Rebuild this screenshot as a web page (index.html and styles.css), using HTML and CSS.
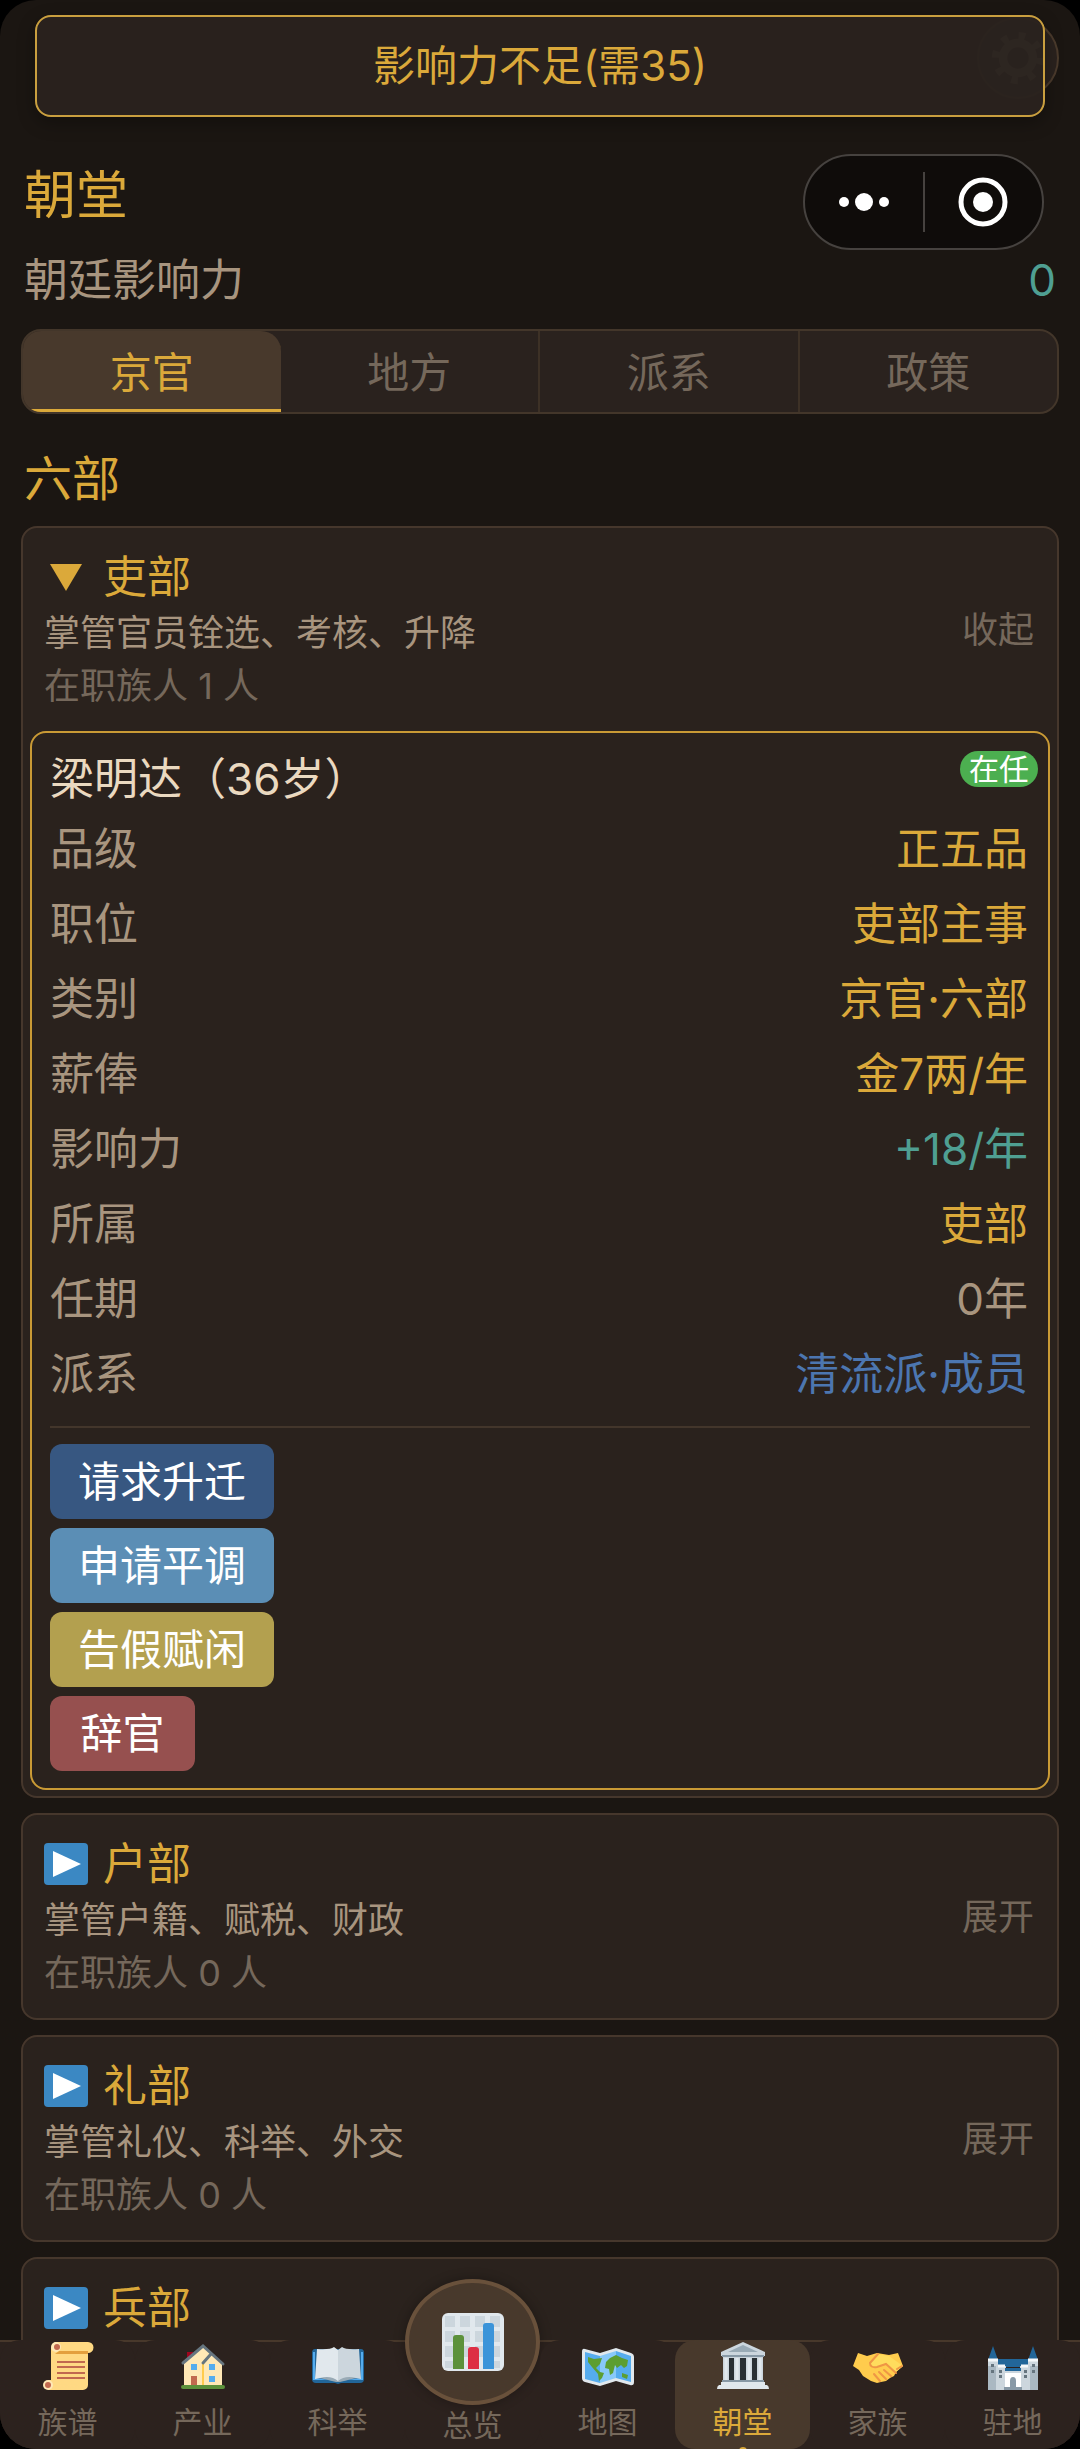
FILE: index.html
```html
<!DOCTYPE html>
<html lang="zh-CN">
<head>
    <meta charset="UTF-8">
    <meta name="viewport" content="width=device-width, initial-scale=1.0">
    <title>朝堂</title>
    <link rel="stylesheet" href="styles.css">
</head>
<body>
    <div class="app">
        <button class="settings" aria-label="设置">
            <svg viewBox="0 0 60 60" width="56" height="56">
                <circle cx="30" cy="30" r="16" fill="none" stroke="#8a7d70" stroke-width="9"/>
                <circle cx="30" cy="30" r="24" fill="none" stroke="#8a7d70" stroke-width="8" stroke-dasharray="7 11.85"/>
            </svg>
        </button>
        <div class="toast" role="alert">影响力不足(需35)</div>
        <div class="capsule">
            <button aria-label="更多">
                <svg viewBox="0 0 52 20" width="52" height="20" fill="#fff">
                    <circle cx="6" cy="10" r="5"/>
                    <circle cx="26" cy="10" r="9"/>
                    <circle cx="46" cy="10" r="5"/>
                </svg>
            </button>
            <button aria-label="关闭">
                <svg viewBox="0 0 52 52" width="52" height="52">
                    <circle cx="26" cy="26" r="22" fill="none" stroke="#fff" stroke-width="5"/>
                    <circle cx="26" cy="26" r="10" fill="#fff"/>
                </svg>
            </button>
        </div>

        <main class="content">
            <h1>朝堂</h1>
            <div class="influence">
                <span>朝廷影响力</span>
                <span class="teal">0</span>
            </div>

            <div class="tabs">
                <button class="tab active">京官</button>
                <button class="tab">地方</button>
                <button class="tab">派系</button>
                <button class="tab">政策</button>
            </div>

            <h2>六部</h2>

            <section class="dept open">
                <div class="dept-head">
                    <div>
                        <h3><svg class="arrow" viewBox="0 0 44 44"><path d="M6 9H38L22 36Z" fill="#dba93a"/></svg>吏部</h3>
                        <p class="desc">掌管官员铨选、考核、升降</p>
                        <p class="count">在职族人 1 人</p>
                    </div>
                    <button class="toggle">收起</button>
                </div>
                <article class="official">
                    <div class="official-head">
                        <h4>梁明达（36岁）</h4>
                        <span class="badge">在任</span>
                    </div>
                    <dl>
                        <div><dt>品级</dt><dd>正五品</dd></div>
                        <div><dt>职位</dt><dd>吏部主事</dd></div>
                        <div><dt>类别</dt><dd>京官·六部</dd></div>
                        <div><dt>薪俸</dt><dd>金7两/年</dd></div>
                        <div><dt>影响力</dt><dd class="teal">+18/年</dd></div>
                        <div><dt>所属</dt><dd>吏部</dd></div>
                        <div><dt>任期</dt><dd class="muted">0年</dd></div>
                        <div><dt>派系</dt><dd class="blue">清流派·成员</dd></div>
                    </dl>
                    <div class="actions">
                        <button class="promote">请求升迁</button>
                        <button class="transfer">申请平调</button>
                        <button class="leave">告假赋闲</button>
                        <button class="resign">辞官</button>
                    </div>
                </article>
            </section>

            <section class="dept">
                <div class="dept-head">
                    <div>
                        <h3><svg class="arrow" viewBox="0 0 44 44"><rect y="1" width="44" height="42" rx="4" fill="#3b88c3"/><path d="M9 9L37 22L9 35Z" fill="#fff"/></svg>户部</h3>
                        <p class="desc">掌管户籍、赋税、财政</p>
                        <p class="count">在职族人 0 人</p>
                    </div>
                    <button class="toggle">展开</button>
                </div>
            </section>

            <section class="dept">
                <div class="dept-head">
                    <div>
                        <h3><svg class="arrow" viewBox="0 0 44 44"><rect y="1" width="44" height="42" rx="4" fill="#3b88c3"/><path d="M9 9L37 22L9 35Z" fill="#fff"/></svg>礼部</h3>
                        <p class="desc">掌管礼仪、科举、外交</p>
                        <p class="count">在职族人 0 人</p>
                    </div>
                    <button class="toggle">展开</button>
                </div>
            </section>

            <section class="dept">
                <div class="dept-head title-only">
                    <h3><svg class="arrow" viewBox="0 0 44 44"><rect y="1" width="44" height="42" rx="4" fill="#3b88c3"/><path d="M9 9L37 22L9 35Z" fill="#fff"/></svg>兵部</h3>
                </div>
            </section>
        </main>

        <nav class="navbar">
            <a href="#zupu">
                <svg viewBox="0 0 52 52">
                    <path d="M13 2H46a5 5 0 0 1 0 11H46V45a5 5 0 0 1-5 5H6V40H9V8Z" fill="#ffd983"/>
                    <path d="M17 11H46V14H13Z" fill="#e39f3d"/>
                    <circle cx="14" cy="7" r="5" fill="#ffe8b6"/><circle cx="15" cy="7" r="3" fill="#c1694f"/>
                    <circle cx="6" cy="45" r="5" fill="#ffe8b6"/><circle cx="6" cy="45" r="3" fill="#c1694f"/>
                    <path d="M15 22H43M15 27H43M15 33H43M15 38H43" stroke="#c1694f" stroke-width="2"/>
                </svg>
                <span>族谱</span>
            </a>
            <a href="#chanye">
                <svg viewBox="0 0 52 52">
                    <rect x="10" y="12" width="6" height="12" fill="#a0041e"/>
                    <path d="M7 23L26 6L45 23V46H7Z" fill="#ffe8b6"/>
                    <path d="M26 22V46" stroke="#ffcc4d" stroke-width="2"/>
                    <path d="M6 23L26 6L46 24M34 14L26 23" fill="none" stroke="#66757f" stroke-width="3" stroke-linecap="round"/>
                    <path d="M14 24H20V30H14ZM32 24H38V30H32ZM32 36H38V42H32Z" fill="#55acee"/>
                    <rect x="14" y="36" width="6" height="9" fill="#c1694f"/>
                    <rect x="4" y="45" width="44" height="4" rx="2" fill="#5c913b"/>
                </svg>
                <span>产业</span>
            </a>
            <a href="#keju">
                <svg viewBox="0 0 52 52">
                    <path d="M3 9H49Q52 9 52 13V39Q52 43 48 43H29L26 44L23 43H4Q0 43 0 39V13Q0 9 3 9Z" fill="#226699"/>
                    <path d="M1 12H3V38L24 41H28L49 38V12H51V40H1Z" fill="#55acee"/>
                    <path d="M5 9Q18 10 22 7L26 10V42Q16 36 3 39Z" fill="#e1e8ed"/>
                    <path d="M47 9Q34 10 30 7L26 10V42Q36 36 49 39Z" fill="#ccd6dd"/>
                    <path d="M8 38Q19 35 26 41Q33 35 44 38L28 42H24Z" fill="#99aab5"/>
                </svg>
                <span>科举</span>
            </a>
            <a href="#zonglan" class="center">
                <i class="orb">
                    <svg viewBox="0 0 64 60">
                        <rect x="1" y="1" width="62" height="58" rx="6" fill="#e1e8ed"/>
                        <path d="M4 4H14V15H4ZM19 4H29V15H19ZM34 4H44V15H34ZM49 4H59V15H49ZM4 19H14V30H4ZM19 19H29V30H19ZM34 19H44V30H34ZM49 19H59V30H49ZM4 34H14V45H4ZM19 34H29V45H19ZM34 34H44V45H34ZM49 34H59V45H49ZM4 49H14V56H4ZM49 49H59V56H49Z" fill="#ccd6dd"/>
                        <path d="M12 57V26Q12 23 15 23H20Q23 23 23 26V57Z" fill="#5c913b"/>
                        <path d="M27 57V38Q27 35 30 35H35Q38 35 38 38V57Z" fill="#dd2e44"/>
                        <path d="M42 57V14Q42 11 45 11H50Q53 11 53 14V57Z" fill="#3b94d9"/>
                    </svg>
                </i>
                <span>总览</span>
            </a>
            <a href="#ditu">
                <svg viewBox="0 0 52 52">
                    <path d="M3 9L18 13L34 8L49 13Q52 14 52 17V42Q52 46 48 45L34 41L18 46L3 42Q0 41 0 38V12Q0 8 3 9Z" fill="#e1e8ed"/>
                    <path d="M3 12L18 16V43L3 39ZM34 11L49 16V42L34 38Z" fill="#55acee"/>
                    <path d="M18 16L34 11V38L18 43Z" fill="#88c9f9"/>
                    <path d="M6 17L12 19L20 18L18 24L14 28L18 32L22 33L20 38L17 41L16 34L10 27L6 22ZM24 22L28 18L34 15L40 18L46 20L45 26L42 28L39 25L35 28L33 25L31 33L28 35L27 29L23 28ZM40 33L46 35L45 39L40 37Z" fill="#5c9e31"/>
                </svg>
                <span>地图</span>
            </a>
            <a href="#chaotang" class="active">
                <svg viewBox="0 0 52 52">
                    <path d="M26 2L48 12V16H4V12Z" fill="#ccd6dd"/>
                    <path d="M26 5L41 12H11Z" fill="#99aab5"/>
                    <rect x="6" y="16" width="40" height="25" fill="#ccd6dd"/>
                    <path d="M12 18H17V40H12ZM23 18H29V40H23ZM35 18H40V40H35Z" fill="#292f33"/>
                    <path d="M9 18V40M20 18V40M32 18V40M43 18V40" stroke="#e1e8ed" stroke-width="3"/>
                    <path d="M5 16H47M5 41H47" stroke="#8899a6" stroke-width="2"/>
                    <path d="M4 42H48V45H50Q52 46 52 49H0Q0 46 2 45H4Z" fill="#e1e8ed"/>
                </svg>
                <span>朝堂</span>
            </a>
            <a href="#jiazu">
                <svg viewBox="0 0 52 52">
                    <path d="M6 13L15 16L25 13L37 15L46 13L51 26L44 32L42 36L38 38L34 41L29 42L25 43L19 41L11 36L7 30L1 26Z" fill="#ffcc4d"/>
                    <path d="M25 14L37 16L51 26L44 32L34 24L25 27Q20 28 18 24Z" fill="#ffdc5d"/>
                    <path d="M26 14L18 23Q18 28 25 27L34 24L44 33M32 30L39 36M27 32L34 39M22 34L28 41M45 29L50 26" fill="none" stroke="#ef9645" stroke-width="2" stroke-linecap="round"/>
                </svg>
                <span>家族</span>
            </a>
            <a href="#zhudi">
                <svg viewBox="0 0 52 52">
                    <path d="M1 20L6 6L11 20ZM41 20L46 6L51 20ZM10 19H42V27H10Z" fill="#226699"/>
                    <path d="M1 20H11V26H19V29H33V26H41V20H51V50H1Z" fill="#ccd6dd"/>
                    <path d="M18 33H34V50H18Z" fill="#fff"/>
                    <path d="M1 20H11M41 20H51M11 26H18M34 26H41" stroke="#f5f8fa" stroke-width="3"/>
                    <path d="M18 28H34V31H18Z" fill="#226699"/>
                    <path d="M1 26H9V50H1ZM43 26H51V50H43Z" fill="#aab8c2"/>
                    <path d="M4 24H7V27H4ZM4 30H7V33H4ZM45 24H48V27H45ZM45 30H48V33H45ZM12 30H15V33H12ZM37 30H40V33H37ZM12 35H15V38H12ZM37 35H40V38H37Z" fill="#66757f"/>
                    <path d="M23 47V41Q23 37 26 37Q29 37 29 41V47H35V50H17V47Z" fill="#8899a6"/>
                </svg>
                <span>驻地</span>
            </a>
        </nav>
    </div>
</body>
</html>
```
FILE: styles.css
```css
* {
    box-sizing: border-box;
    margin: 0;
    padding: 0;
}

body {
    background: #000;
    color: #a8957f;
    font-family: Inter, "Noto Sans CJK SC", sans-serif;
    font-size: 44px;
    line-height: 56px;
}

h1, h2, h3, h4 {
    font-weight: 400;
    color: #dba93a;
}

button {
    border: none;
    background: none;
    color: inherit;
    font: inherit;
    cursor: pointer;
}

.teal {
    color: #4f9f92;
}

.app {
    position: relative;
    display: flex;
    flex-direction: column;
    height: 100vh;
    overflow: hidden;
    border-radius: 36px;
    background: #1b1612;
}

/* overlays */
.toast {
    position: absolute;
    top: 15px;
    left: 35px;
    right: 35px;
    padding: 21px;
    border: 2px solid #c99f3f;
    border-radius: 16px;
    background: rgba(42, 34, 30, 0.96);
    box-shadow: 0 6px 18px rgba(0, 0, 0, 0.3);
    color: #dba93a;
    font-size: 42px;
    text-align: center;
}

.settings {
    position: absolute;
    top: 17px;
    right: 21px;
    display: flex;
    align-items: center;
    justify-content: center;
    width: 82px;
    height: 82px;
    border: 2px solid #4a3a2c;
    border-radius: 50%;
    background: #2a221e;
}

.capsule {
    position: absolute;
    top: 154px;
    right: 36px;
    display: flex;
    align-items: center;
    width: 241px;
    height: 96px;
    border: 2px solid #46423f;
    border-radius: 48px;
    background: #0f0c0a;
}

.capsule button {
    display: flex;
    flex: 1;
    align-items: center;
    justify-content: center;
    height: 60px;
}

.capsule button + button {
    border-left: 2px solid #46423f;
}

/* page */
.content {
    flex: 1;
    min-height: 0;
    overflow-y: auto;
    scrollbar-width: none;
    padding: 166px 21px 0;
}

h1 {
    padding: 0 3px;
    font-size: 52px;
    line-height: 60px;
}

.influence {
    display: flex;
    justify-content: space-between;
    margin: 26px 0 21px;
    padding: 0 3px;
}

.tabs {
    display: flex;
    border: 2px solid #43362a;
    border-radius: 20px;
    background: #2a221e;
    overflow: hidden;
}

.tab {
    flex: 1;
    height: 81px;
    padding-top: 2px;
    border-right: 2px solid #3d3126;
    color: #75685b;
    font-size: 42px;
}

.tab:last-child {
    border-right: none;
}

.tab.active {
    border-right: none;
    border-radius: 0 20px 0 0;
    background: #48392c;
    box-shadow: inset 0 -3px #dba93a;
    color: #dba93a;
}

h2 {
    margin: 35px 0 17px;
    padding: 0 3px;
    font-size: 48px;
    line-height: 60px;
}

.dept {
    margin-bottom: 15px;
    border: 2px solid #46372c;
    border-radius: 16px;
    background: #2a221d;
}

.dept.open {
    padding-bottom: 6px;
}

.dept-head {
    display: flex;
    align-items: center;
    justify-content: space-between;
    min-height: 203px;
    padding: 21px 23px 20px 21px;
}

.dept-head.title-only {
    align-items: flex-start;
}

h3 {
    display: flex;
    align-items: center;
    gap: 15px;
    font-size: 44px;
}

.arrow {
    width: 44px;
    height: 44px;
}

.desc, .count, .toggle {
    font-size: 36px;
}

.count, .toggle {
    color: #75685b;
}

.count {
    line-height: 50px;
}

.official {
    margin: 0 7px;
    padding: 18px 18px 17px;
    border: 2px solid #c99a35;
    border-radius: 16px;
}

.official-head {
    display: flex;
    align-items: flex-start;
    justify-content: space-between;
    height: 60px;
    margin-right: -8px;
}

h4 {
    color: #ead9c0;
    font-size: 44px;
}

.badge {
    padding: 0 9px;
    border-radius: 18px;
    background: #4caf50;
    color: #fff;
    font-size: 30px;
    line-height: 36px;
}

dl div {
    display: flex;
    align-items: center;
    justify-content: space-between;
    height: 75px;
    padding: 0 2px 0 0;
}

dd {
    color: #dba93a;
}

dd.teal {
    color: #4f9f92;
}

dd.muted {
    color: #a8957f;
}

dd.blue {
    color: #4c76b0;
}

.actions {
    display: flex;
    flex-direction: column;
    align-items: flex-start;
    gap: 9px;
    margin-top: 15px;
    padding-top: 16px;
    border-top: 2px solid #43362b;
}

.actions button {
    min-width: 145px;
    height: 75px;
    padding: 0 28px;
    border-radius: 12px;
    color: #fff;
    font-size: 42px;
}

.actions .promote {
    background: #375781;
}

.actions .transfer {
    background: #5b8eb5;
}

.actions .leave {
    background: #b3a04f;
}

.actions .resign {
    background: #96504f;
}

/* bottom nav */
.navbar {
    position: relative;
    display: flex;
    height: 109px;
    border-top: 2px solid #48382b;
    background: #2c221e;
}

.navbar a {
    position: relative;
    display: flex;
    flex: 1;
    flex-direction: column;
    align-items: center;
    margin-top: -2px;
    border-radius: 20px;
    background: #2c221e;
    color: #75685b;
    font-size: 30px;
    line-height: 40px;
    text-decoration: none;
}

.navbar a svg {
    width: 52px;
    height: 52px;
    margin-bottom: 10px;
}

.navbar a.active {
    background: #48392c;
    color: #dba93a;
}

.navbar a.active::after {
    content: "";
    position: absolute;
    bottom: -6px;
    width: 8px;
    height: 8px;
    border-radius: 50%;
    background: #dba93a;
}

.navbar a.center {
    justify-content: flex-end;
    padding-bottom: 4px;
}

.orb {
    display: flex;
    flex-shrink: 0;
    align-items: center;
    justify-content: center;
    width: 100%;
    height: 126px;
    border: 4px solid #69513b;
    border-radius: 50%;
    background: #48392c;
    box-shadow: 0 0 12px rgba(0, 0, 0, 0.3);
}

.navbar .orb svg {
    width: 64px;
    height: 60px;
    margin: 0;
}
```
